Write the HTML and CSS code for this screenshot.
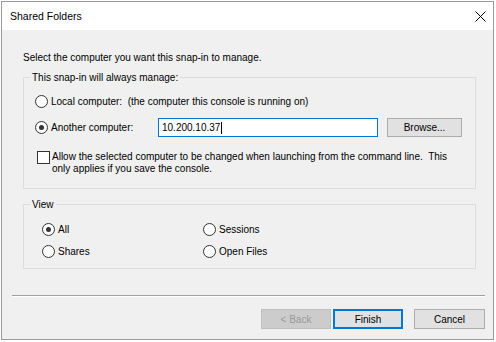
FILE: index.html
```html
<!DOCTYPE html>
<html lang="en">

<head>
  <title>Shared Folders</title>
  <link rel="stylesheet" href="styles.css">
</head>

<body>
  <div class="dialog">
    <div class="titlebar">
      <span class="title">Shared Folders</span>
      <svg class="close" width="11" height="11" viewBox="0 0 11 11">
        <path d="M0.5 0.5L10.5 10.5M10.5 0.5L0.5 10.5" stroke="#000" stroke-width="1" fill="none"/>
      </svg>
    </div>

    <div class="dialog-body">
      <p class="intro">Select the computer you want this snap-in to manage.</p>

      <!-- Target computer -->
      <fieldset class="group manage">
        <legend>This snap-in will always manage:</legend>
        <div class="row first">
          <span class="radio"></span>
          <span>Local computer:&nbsp; (the computer this console is running on)</span>
        </div>
        <div class="row machine">
          <span class="radio checked"></span>
          <span class="machine-label">Another computer:</span>
          <div class="textbox">10.200.10.37<span class="caret"></span></div>
          <button class="btn browse">Browse...</button>
        </div>
        <div class="row check">
          <span class="checkbox"></span>
          <span class="check-text">Allow the selected computer to be changed when launching from the command line.&nbsp; This<br>only applies if you save the console.</span>
        </div>
      </fieldset>

      <!-- View -->
      <fieldset class="group view">
        <legend>View</legend>
        <div class="view-grid">
          <div class="row"><span class="radio checked"></span><span>All</span></div>
          <div class="row"><span class="radio"></span><span>Sessions</span></div>
          <div class="row"><span class="radio"></span><span>Shares</span></div>
          <div class="row"><span class="radio"></span><span>Open Files</span></div>
        </div>
      </fieldset>
    </div>

    <div class="separator"></div>

    <div class="buttons">
      <button class="btn disabled">&lt; Back</button>
      <button class="btn default">Finish</button>
      <button class="btn cancel">Cancel</button>
    </div>
  </div>
</body>
</html>
```

FILE: styles.css
```css
body {
  margin: 0;
  padding: 1px 0 0 1px;
  background-color: #ffffff;
  font-family: "Liberation Sans", Arial, sans-serif;
  font-size: 10px;
  color: #000000;
}

.dialog {
  width: 493px;
  height: 339px;
  box-sizing: border-box;
  border: 1px solid #9a9a9a;
  background-color: #f0f0f0;
  display: flex;
  flex-direction: column;
}

.titlebar {
  height: 28px;
  background-color: #ffffff;
  display: flex;
  align-items: center;
  justify-content: space-between;
  padding: 0 7px 0 8px;
}

.title {
  font-size: 10.5px;
}

.close {
  display: block;
}

.dialog-body {
  padding-left: 21px;
}

.intro {
  margin: 21px 0 0;
  line-height: 13px;
}

.group {
  width: 453px;
  box-sizing: border-box;
  margin: 7px 0 0;
  padding: 0;
  border: 1px solid #dcdcdc;
}

.group legend {
  margin-left: 6px;
  padding: 0 2px;
  line-height: 13px;
}

.manage {
  padding: 0 0 13px 11px;
}

.manage legend {
  margin-left: -5px;
}

.row {
  display: flex;
  align-items: center;
  height: 16px;
  white-space: nowrap;
}

.row.first {
  margin-top: 9px;
}

.row.machine {
  margin-top: 9px;
  height: 19px;
}

.row.check {
  margin-top: 14px;
  height: auto;
  align-items: flex-start;
  padding-left: 2px;
}

.radio {
  width: 13px;
  height: 13px;
  box-sizing: border-box;
  border: 1px solid #333333;
  border-radius: 50%;
  background-color: #ffffff;
  margin-right: 3px;
  flex: none;
  display: inline-flex;
  align-items: center;
  justify-content: center;
}

.radio.checked::after {
  content: "";
  width: 5px;
  height: 5px;
  border-radius: 50%;
  background-color: #333333;
}

.checkbox {
  width: 13px;
  height: 13px;
  box-sizing: border-box;
  border: 1px solid #333333;
  background-color: #ffffff;
  margin: 0 2px 0 0;
  flex: none;
}

.check-text {
  line-height: 12px;
}

.machine-label {
  width: 107px;
  flex: none;
}

.textbox {
  width: 220px;
  height: 19px;
  box-sizing: border-box;
  border: 1px solid #0078d7;
  background-color: #ffffff;
  padding: 0 3px;
  display: flex;
  align-items: center;
}

.caret {
  width: 1px;
  height: 12px;
  background-color: #000000;
  margin-left: 1px;
}

.btn {
  font-family: "Liberation Sans", Arial, sans-serif;
  font-size: 10px;
  color: #000000;
  background-color: #e1e1e1;
  border: 1px solid #adadad;
  padding: 0;
  height: 20px;
  width: 70px;
}

.browse {
  margin-left: 9px;
  width: 75px;
  height: 19px;
}

.view {
  margin-top: 9px;
  padding: 0 0 9px 18px;
}

.view legend {
  margin-left: -12px;
}

.view-grid {
  margin-top: 10px;
  display: grid;
  grid-template-columns: 161px auto;
  row-gap: 6px;
}

.separator {
  margin: 26px 8px 0 10px;
  height: 2px;
  box-sizing: border-box;
  border-top: 1px solid #a0a0a0;
  border-bottom: 1px solid #ffffff;
}

.buttons {
  display: flex;
  justify-content: flex-end;
  padding-right: 8px;
  margin-top: 12px;
}

.btn.disabled {
  background-color: #cccccc;
  border-color: #bfbfbf;
  color: #9a9a9a;
}

.btn.default {
  margin-left: 2px;
  border: 2px solid #0078d7;
}

.btn.cancel {
  margin-left: 11px;
  width: 71px;
}
```
